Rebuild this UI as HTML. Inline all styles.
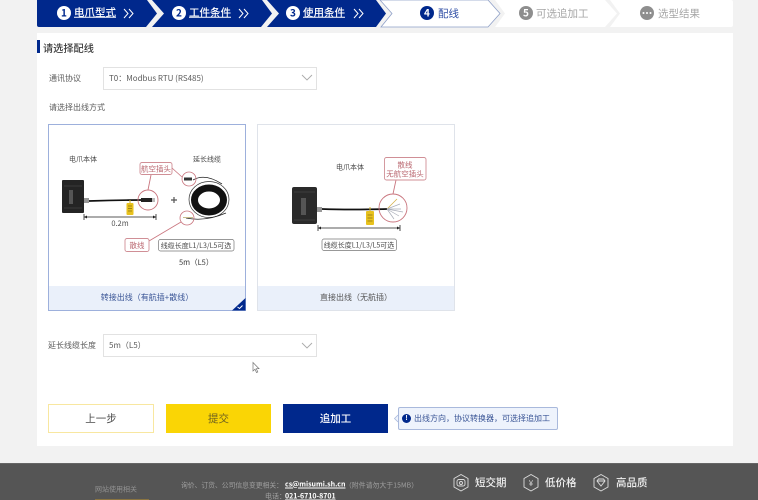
<!DOCTYPE html>
<html lang="zh-CN"><head><meta charset="utf-8"><title>配线</title>
<style>
*{box-sizing:border-box}
html,body{margin:0;padding:0;width:758px;height:500px;overflow:hidden;background:#f2f2f2}
body{position:relative;font-family:"Noto Sans CJK SC","Liberation Sans",sans-serif;color:#555}
#r{position:absolute;left:0;top:0;width:758px;height:500px;filter:blur(.35px)}
.a{position:absolute}
.t{position:absolute;white-space:nowrap;line-height:1;transform:translateY(-50%)}
.s{font-size:8px;color:#5c5c5c}
.sel{position:absolute;left:103px;width:214px;background:#fff;border:1px solid #e2e2e2}
.card{position:absolute;top:124px;height:187px;width:198px;background:#fff;border:1px solid #dfe3ea}
.foot{position:absolute;left:0;right:0;bottom:0;height:24px;background:#eaf0fa;text-align:center;font-size:8px;line-height:24px}
.btn{position:absolute;top:404px;height:29px;width:106px;text-align:center;font-size:10.500px;line-height:29px}
svg{position:absolute;left:0;top:0;overflow:visible}
svg text{font-family:"Noto Sans CJK SC","Liberation Sans",sans-serif}
</style></head><body><div id="r">

<!-- step bar -->
<svg width="758" height="500" viewBox="0 0 758 500">
<path d="M39 0H147L157 13.500L146 27H39Q37 27 37 25V0Z" fill="#00288c"/>
<path d="M152 0H262L272 13.500L261 27H152L164 13.500Z" fill="#00288c"/>
<path d="M267 0H376L386 13.500L376 27H267L279 13.500Z" fill="#00288c"/>
<path d="M380 0H488L500 13.500L488 27H381L392 13.500Z" fill="#fff" stroke="#8fa0c8" stroke-width=".8"/>
<path d="M495 0H605L617 13.500L605 27H495L505 13.500Z" fill="#fff"/>
<path d="M610 0H731Q733 0 733 2V25Q733 27 731 27H610L620 13.500Z" fill="#fff"/>
<g fill="none" stroke="#fff" stroke-width="1"><path d="M124 9l4 4.500-4 4.500M129 9l4 4.500-4 4.500M239 9l4 4.500-4 4.500M244 9l4 4.500-4 4.500M354 9l4 4.500-4 4.500M359 9l4 4.500-4 4.500"/></g>
<circle cx="64" cy="13" r="7" fill="#fff"/><circle cx="179" cy="13" r="7" fill="#fff"/><circle cx="293" cy="13" r="7" fill="#fff"/>
<circle cx="427" cy="13" r="7" fill="#00288c"/><circle cx="526" cy="13" r="7" fill="#8e8e8e"/><circle cx="647" cy="13" r="7" fill="#8e8e8e"/>
<g fill="#fff"><circle cx="643.500" cy="13" r="1"/><circle cx="647" cy="13" r="1"/><circle cx="650.500" cy="13" r="1"/></g>
<g font-size="10" font-weight="700" text-anchor="middle">
<text x="64" y="16.500" fill="#00288c">1</text><text x="179" y="16.500" fill="#00288c">2</text><text x="293" y="16.500" fill="#00288c">3</text>
<text x="427" y="16.500" fill="#fff">4</text><text x="526" y="16.500" fill="#fff">5</text></g>
</svg>
<div class="t" style="left:74px;top:13px;font-size:10.500px;font-weight:500;color:#fff;text-decoration:underline">电爪型式</div>
<div class="t" style="left:189px;top:13px;font-size:10.500px;font-weight:500;color:#fff;text-decoration:underline">工件条件</div>
<div class="t" style="left:303px;top:13px;font-size:10.500px;font-weight:500;color:#fff;text-decoration:underline">使用条件</div>
<div class="t" style="left:438px;top:13.500px;font-size:10.500px;color:#2f4ea5">配线</div>
<div class="t" style="left:536px;top:13.500px;font-size:10.500px;color:#a6a6a6">可选追加工</div>
<div class="t" style="left:658px;top:13.500px;font-size:10.500px;color:#a6a6a6">选型结果</div>

<!-- main card -->
<div class="a" style="left:37px;top:33px;width:696px;height:413px;background:#fff"></div>
<div class="a" style="left:37px;top:40px;width:2.500px;height:13px;background:#00288c"></div>
<div class="t" style="left:43px;top:47.500px;font-size:10.200px;font-weight:500;color:#3c3c3c">请选择配线</div>

<div class="t s" style="left:49px;top:79px">通讯协议</div>
<div class="sel" style="top:67px;height:23px"></div>
<div class="t s" style="left:109px;top:79px">T0：Modbus RTU (RS485)</div>
<div class="t s" style="left:49px;top:107.500px">请选择出线方式</div>

<div class="card" style="left:48px;border-color:#9db0dc"><div class="foot" style="color:#3a5596">转接出线（有航插+散线）</div></div>
<div class="card" style="left:257px"><div class="foot" style="color:#555">直接出线（无航插）</div></div>

<svg width="758" height="500" viewBox="0 0 758 500">
<!-- select chevron -->
<path d="M302 75l5 5 5-5" fill="none" stroke="#aaa" stroke-width=".9"/>
<!-- corner mark -->
<path d="M245.500 298V310.500H232Z" fill="#00288c"/>
<path d="M237.500 307l2 1.500 3-3" fill="none" stroke="#fff" stroke-width="1"/>

<!-- card 1 diagram -->
<rect x="62" y="180" width="22" height="33" rx="1" fill="#242424"/>
<rect x="69" y="190" width="4" height="14" fill="#555"/>
<path d="M64 186h18M64 208h18" stroke="#3a3a3a" stroke-width="1"/>
<rect x="84" y="198" width="5" height="5" fill="#999"/>
<path d="M89 201Q115 200 142 200" fill="none" stroke="#111" stroke-width="1.700"/>
<rect x="141" y="198" width="11" height="4" fill="#222"/><rect x="152" y="198" width="3" height="4" fill="#bbb"/>
<rect x="126.500" y="203" width="7" height="12" rx="1" fill="#e8c21e"/><path d="M130 200v3" stroke="#d3b020"/>
<path d="M128 206h4M128 208.500h4M128 211h4" stroke="#8a7415" stroke-width=".7"/>
<path d="M84 217H156M84 214v6M156 214v6" stroke="#222" stroke-width=".8"/>
<path d="M84 217l3-1.500v3ZM156 217l-3-1.500v3Z" fill="#222"/>
<circle cx="148" cy="200" r="10" fill="none" stroke="#c9757e" stroke-width=".9"/>
<path d="M148 190L151 175" stroke="#c9757e" stroke-width=".9"/>
<rect x="140" y="162.500" width="32" height="12" rx="2" fill="#fff" stroke="#d08f96" stroke-width=".9"/>
<text x="156" y="171.500" font-size="7.500" fill="#b9656e" text-anchor="middle">航空插头</text>
<text x="69" y="161.500" font-size="7" fill="#4a4a4a">电爪本体</text>
<text x="193" y="161.500" font-size="7" fill="#4a4a4a">延长线缆</text>
<path d="M171 200h6M174 197v6" stroke="#555" stroke-width="1.200"/>
<ellipse cx="209" cy="199.500" rx="20" ry="18" fill="none" stroke="#333" stroke-width=".7"/>
<ellipse cx="209" cy="200" rx="14.500" ry="12" fill="none" stroke="#111" stroke-width="7"/>
<path d="M193 180Q205 173 222 184M186 218Q205 222 226 213" fill="none" stroke="#222" stroke-width=".8"/>
<rect x="184" y="177.500" width="8" height="3" fill="#333"/>
<path d="M183 217.500h10" stroke="#c8bd8c" stroke-width="1"/>
<circle cx="189" cy="179" r="7" fill="none" stroke="#c9757e" stroke-width=".8"/>
<circle cx="187" cy="218" r="7" fill="none" stroke="#c9757e" stroke-width=".8"/>
<path d="M172 168L182 177M149 241L181 222" stroke="#c9757e" stroke-width=".8"/>
<rect x="125" y="238.500" width="24" height="13" rx="2" fill="#fff" stroke="#d08f96" stroke-width=".9"/>
<text x="137" y="248" font-size="7.500" fill="#b9656e" text-anchor="middle">散线</text>
<rect x="158.500" y="239.500" width="75.500" height="11.500" rx="2" fill="#fff" stroke="#777" stroke-width=".7"/>
<text x="196" y="248" font-size="7" fill="#4a4a4a" text-anchor="middle">线缆长度L1/L3/L5可选</text>
<text x="120" y="226" font-size="7.500" fill="#555" text-anchor="middle">0.2m</text>
<text x="179" y="265" font-size="7.500" fill="#3a3a3a">5m（L5）</text>

<!-- card 2 diagram -->
<rect x="292" y="187" width="25" height="37" rx="2" fill="#2a2a2a"/>
<rect x="301" y="198" width="5" height="17" fill="#555"/>
<path d="M294 192h21M294 220h21" stroke="#3f3f3f" stroke-width="1"/>
<rect x="317" y="207" width="5" height="5" fill="#999"/>
<path d="M322 209Q350 210 387 209" fill="none" stroke="#111" stroke-width="1.700"/>
<path d="M387 209L397 199" stroke="#d4b04a" stroke-width=".8"/>
<path d="M387 209L400 204M387 209L401 209M387 209L399 216M387 209L394 219M387 209L403 212" stroke="#a9adb8" stroke-width=".7"/>
<rect x="366" y="211" width="8" height="14" rx="1" fill="#e8c21e"/><path d="M370 207v4" stroke="#d3b020"/>
<path d="M367.500 215h5M367.500 218h5M367.500 221h5" stroke="#8a7415" stroke-width=".7"/>
<path d="M318 228H400M318 225v6M400 225v6" stroke="#222" stroke-width=".8"/>
<path d="M318 228l3-1.500v3ZM400 228l-3-1.500v3Z" fill="#222"/>
<circle cx="393" cy="208" r="14" fill="none" stroke="#c9757e" stroke-width=".9"/>
<path d="M393 194L396 180" stroke="#c9757e" stroke-width=".9"/>
<rect x="384.500" y="157.500" width="41.500" height="22.500" rx="2" fill="#fff" stroke="#d08f96" stroke-width=".9"/>
<text x="405" y="167.500" font-size="7.500" fill="#b9656e" text-anchor="middle">散线</text>
<text x="405" y="176.500" font-size="7.500" fill="#b9656e" text-anchor="middle">无航空插头</text>
<text x="336" y="169.500" font-size="7" fill="#4a4a4a">电爪本体</text>
<rect x="322" y="239" width="74.500" height="11.500" rx="2" fill="#fff" stroke="#777" stroke-width=".7"/>
<text x="359" y="247.500" font-size="7" fill="#4a4a4a" text-anchor="middle">线缆长度L1/L3/L5可选</text>

<!-- cursor -->
<path d="M253 362.500V371l2-1.800 1.500 3.300 1.300-.6-1.500-3.200h2.700Z" fill="#fff" stroke="#777" stroke-width=".7"/>

<!-- tooltip -->
<path d="M398 415l-3.500 3.500 3.500 3.500" fill="#eef3fc" stroke="#a9b9dc" stroke-width=".8"/>
</svg>

<div class="t s" style="left:48px;top:346px">延长线缆长度</div>
<div class="sel" style="top:334px;height:23px"></div>
<div class="t s" style="left:109px;top:346px">5m（L5）</div>
<svg width="758" height="500" viewBox="0 0 758 500"><path d="M302 343l5 5 5-5" fill="none" stroke="#aaa" stroke-width=".9"/></svg>

<div class="btn" style="left:48px;background:#fff;border:1px solid #f8e7a0;color:#4a4a4a;line-height:27px">上一步</div>
<div class="btn" style="left:166px;width:105px;background:#fad505;color:#6d6020">提交</div>
<div class="btn" style="left:283px;width:105px;background:#00288c;color:#fff;font-weight:500">追加工</div>

<div class="a" style="left:398px;top:407px;width:160px;height:23px;background:#eef3fc;border:1px solid #a9b9dc;border-radius:2px"></div>
<div class="a" style="left:402px;top:414px;width:9px;height:9px;border-radius:50%;background:#00288c;color:#fff;font:700 7px/9px 'Liberation Sans',sans-serif;text-align:center">!</div>
<div class="t" style="left:414px;top:419px;font-size:8px;color:#3a5596">出线方向，协议转换器，可选择追加工</div>

<!-- footer -->
<div class="a" style="left:0;top:463px;width:758px;height:37px;background:#555;border-top:1px solid #666"></div>
<div class="t" style="left:95px;top:490px;font-size:7px;color:#929292">网站使用相关</div>
<div class="a" style="left:95px;top:499px;width:54px;height:1px;background:#8a7440"></div>
<div class="t" style="left:181px;top:484.500px;font-size:6.800px;color:#a0a0a0">询价、订货、公司信息变更相关：</div>
<div class="t" style="left:285px;top:484.500px;font-size:7px;font-weight:700;color:#fff;text-decoration:underline">cs@misumi.sh.cn</div>
<div class="t" style="left:345px;top:484.500px;font-size:6.800px;letter-spacing:.1px;color:#a0a0a0">（附件请勿大于15MB）</div>
<div class="t" style="left:265px;top:496.500px;font-size:7px;color:#a0a0a0">电话：</div>
<div class="t" style="left:285px;top:496.500px;font-size:7px;font-weight:700;color:#fff;text-decoration:underline">021-6710-8701</div>
<svg width="758" height="500" viewBox="0 0 758 500">
<g fill="none" stroke="#ddd" stroke-width=".9">
<path d="M461 474.500l7 4v8.500l-7 4-7-4v-8.500Z"/><rect x="457" y="479.500" width="8" height="6.500" rx="2"/><circle cx="461" cy="483" r="1.500"/>
<path d="M531 474.500l7 4v8.500l-7 4-7-4v-8.500Z"/>
<path d="M601 474.500l7 4v8.500l-7 4-7-4v-8.500Z"/><path d="M597 481l1.500-2h5l1.500 2-4 5ZM597 481h8"/>
</g>
<text x="531" y="486" font-size="8" fill="#ddd" text-anchor="middle">¥</text>
</svg>
<div class="t" style="left:475px;top:483px;font-size:10.500px;font-weight:500;color:#f0f0f0">短交期</div>
<div class="t" style="left:545px;top:483px;font-size:10.500px;font-weight:500;color:#f0f0f0">低价格</div>
<div class="t" style="left:616px;top:483px;font-size:10.500px;font-weight:500;color:#f0f0f0">高品质</div>

</div></body></html>
